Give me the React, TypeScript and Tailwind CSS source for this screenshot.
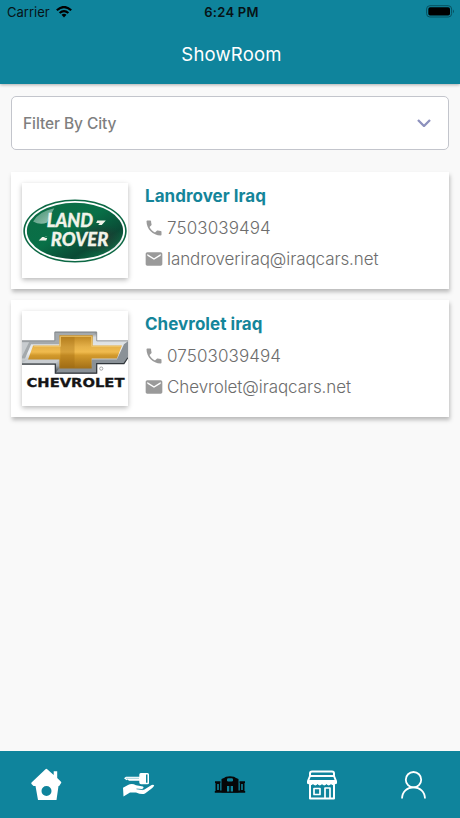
import React from 'react';

function PhoneIcon() {
  return (
    <svg viewBox="0 0 24 24" className="mb-0.5 size-5 shrink-0 fill-[#9a9a9a]">
      <path d="M6.62 10.79c1.44 2.83 3.76 5.14 6.59 6.59l2.2-2.2c.27-.27.67-.36 1.02-.24 1.12.37 2.33.57 3.57.57.55 0 1 .45 1 1V20c0 .55-.45 1-1 1-9.39 0-17-7.61-17-17 0-.55.45-1 1-1h3.500c.55 0 1 .45 1 1 0 1.250.2 2.450.57 3.570.11.35.03.74-.25 1.020z" />
    </svg>
  );
}

function MailIcon() {
  return (
    <svg viewBox="0 0 24 24" className="mb-0.5 size-5 shrink-0 fill-[#9a9a9a]">
      <path d="M20 4H4c-1.100 0-2 .9-2 2v12c0 1.100.9 2 2 2h16c1.100 0 2-.9 2-2V6c0-1.100-.9-2-2-2zm0 4-8 5-8-5V6l8 5 8-5z" />
    </svg>
  );
}

function LandRoverLogo() {
  return (
    <svg viewBox="0 0 105 94" className="h-full w-full">
      <defs>
        <linearGradient id="lrGreen" x1="0" y1="0" x2="1" y2="1">
          <stop offset="0" stopColor="#0d6b45" />
          <stop offset="0.45" stopColor="#087047" />
          <stop offset="0.72" stopColor="#0a4a35" />
          <stop offset="1" stopColor="#128a55" />
        </linearGradient>
        <radialGradient id="lrShade">
          <stop offset="0" stopColor="#253a33" stopOpacity="0.9" />
          <stop offset="1" stopColor="#253a33" stopOpacity="0" />
        </radialGradient>
        <linearGradient id="lrShine" x1="0" y1="0" x2="1" y2="1">
          <stop offset="0" stopColor="#b8d8cb" stopOpacity="0.3" />
          <stop offset="1" stopColor="#b8d8cb" stopOpacity="0.85" />
        </linearGradient>
      </defs>
      <ellipse cx="52.500" cy="47.500" rx="51.200" ry="31.300" fill="#0c6844" />
      <ellipse cx="52.500" cy="47.500" rx="49.600" ry="29.800" fill="#fff" />
      <ellipse cx="52.500" cy="47.500" rx="47.700" ry="27.900" fill="url(#lrGreen)" />
      <ellipse cx="76" cy="55" rx="24" ry="15" fill="url(#lrShade)" />
      <path d="M11 38Q17 28 32 25Q27 34 25 39Q18 42 11 38Z" fill="url(#lrShine)" />
      <g fill="#f1f3e9" stroke="#f1f3e9" strokeWidth="0.3" className="font-['Lato',sans-serif] font-black italic">
        <text x="24.500" y="43.600" fontSize="18.500" textLength="46" lengthAdjust="spacingAndGlyphs">LAND</text>
        <text x="28.500" y="62.500" fontSize="18.500" textLength="57" lengthAdjust="spacingAndGlyphs">ROVER</text>
      </g>
      <path d="M74.500 37H83L79 41.500H75.500L77 39.500H73.500Z M25.500 52.500L21.500 54.500H25L24 57H16.500L20 53.500H22.500Z" fill="#f1f3e9" />
    </svg>
  );
}

function ChevroletLogo() {
  return (
    <svg viewBox="0 0 105 94" className="h-full w-full">
      <defs>
        <linearGradient id="chSilver" x1="0" y1="0" x2="0" y2="1">
          <stop offset="0" stopColor="#777b7e" />
          <stop offset="0.13" stopColor="#d5d9dc" />
          <stop offset="0.5" stopColor="#eef0f1" />
          <stop offset="0.82" stopColor="#a2a8ad" />
          <stop offset="1" stopColor="#343a40" />
        </linearGradient>
        <linearGradient id="chGold" x1="0" y1="0" x2="0" y2="1">
          <stop offset="0" stopColor="#bc8420" />
          <stop offset="0.35" stopColor="#e6b24a" />
          <stop offset="0.5" stopColor="#f0bb4e" />
          <stop offset="0.6" stopColor="#d39a2c" />
          <stop offset="1" stopColor="#a26f17" />
        </linearGradient>
      </defs>
      <path d="M32.500 20.500H74V29.500H105V45L101 52H74V61.500H33V52.500H0V29.500H32.500Z" fill="url(#chSilver)" />
      <path d="M32.500 20.500H74L70 24H37V33H9L3 47H0V29.500H32.500Z" fill="#a4a9ac" />
      <path d="M0 31H7L0 45Z" fill="#c8cccf" />
      <path d="M33 61.500L37 56.500H69V48H94L101 33L105 30V45L101 52H74V61.500Z" fill="#8a9197" />
      <path d="M33.500 52L37 48H6L0 51.500Z" fill="#c9cdd1" />
      <path d="M0 52.500H33V61.500H74V52H101L105 46" fill="none" stroke="#30363b" strokeWidth="1.200" />
      <path d="M0 29.500H32.500V21H74V29.500H105" fill="none" stroke="#7c8185" strokeWidth="0.800" />
      <path d="M37 24H70V34H99L94 47H69V57H37V48H6L11 34H37Z" fill="url(#chGold)" />
      <path d="M38 25H52V56H38Z" fill="#99650e" opacity="0.3" />
      <path d="M12 35H38V25H69V35H98" fill="none" stroke="#efc86e" strokeWidth="0.900" />
      <circle cx="78.500" cy="57" r="1.600" fill="none" stroke="#888" strokeWidth="0.700" />
      <text x="4.500" y="75.500" fontSize="12.200" fill="#151515" stroke="#151515" strokeWidth="0.300" textLength="97" lengthAdjust="spacingAndGlyphs" className="font-['DejaVu_Sans',sans-serif] font-bold">CHEVROLET</text>
    </svg>
  );
}

type ShowroomProps = {
  name: string;
  phone: string;
  email: string;
  logo: React.ReactNode;
};

function ShowroomCard({ name, phone, email, logo }: ShowroomProps) {
  return (
    <article className="flex h-[117px] gap-[17px] bg-white pt-[11px] pl-[11px] shadow-[1px_3px_4px_rgba(0,0,0,0.25)]">
      <div className="h-[95px] w-[106px] shrink-0 bg-white shadow-[0_2px_5px_rgba(0,0,0,0.28)]">{logo}</div>
      <div className="flex flex-col pt-px">
        <h2 className="h-[29px] text-[17px] leading-[25px] font-bold tracking-[0.04px] whitespace-nowrap text-[#14859a]">{name}</h2>
        <div className="-ml-px flex h-[31px] items-center gap-[3px] text-[17px] font-light text-[#6d6d6d]">
          <PhoneIcon />
          <span className="tracking-[0.1px] whitespace-nowrap">{phone}</span>
        </div>
        <div className="-ml-px flex h-[31px] items-center gap-[3px] text-[17px] font-light text-[#6d6d6d]">
          <MailIcon />
          <span className="tracking-[-0.09px] whitespace-nowrap">{email}</span>
        </div>
      </div>
    </article>
  );
}

function HouseIcon() {
  return (
    <svg viewBox="0 0 32 32" className="mb-0.5 size-8 fill-white">
      <path fillRule="evenodd" d="M15.500 1.200Q16.300.3 17.200 1.200L23.700 7V3.300H27.200V10L31 13.700Q31.800 14.600 30.800 15.500L29.200 18H28.500L26.500 32H8L5.500 18H3.500L1.500 16Q.8 15 1.800 14.200ZM16.500 18A5 5 0 1 0 16.500 28A5 5 0 1 0 16.500 18Z" />
    </svg>
  );
}

function KeyHandIcon() {
  return (
    <svg viewBox="0 0 32 32" className="size-8 overflow-visible">
      <path fillRule="evenodd" d="M17.300 5.500Q17.300 4 18.800 4H25.500Q27 4 27 5.500V14Q27 15.300 25.500 15.300H19Q17.300 15.300 17.300 13.500V11.700H7L5.500 10.500L4.500 11.300L3 10L2 9.200L4 7.700H17.300ZM24 5.500V13.700H25.500V5.500Z" fill="#fff" />
      <path d="M4 9.300H17" stroke="#0f849c" strokeWidth="0.400" />
      <path d="M1 18.700L6 16Q10 13.800 14 16.300L21 17.500Q22.500 19.300 20 20L16 20.300L22 20.800L28 17Q31.300 14.700 32.200 16.500Q31.500 18.500 27 21.500L23 24.500Q20 26 14 23.500H8L1.500 27.500Z" fill="#fff" />
      <path d="M14.500 19.900L20.500 20.600L23 18.600" fill="none" stroke="#0f849c" strokeWidth="0.700" />
    </svg>
  );
}

function BuildingIcon() {
  return (
    <svg viewBox="0 0 32 32" className="size-8">
      <path d="M7.500 10L10.500 8.800Q11 7.200 16 7.200T21.500 8.800L24.500 10V23.500H7.500Z" fill="#060708" />
      <path d="M1 12.200H6.500V14H6.200V21.500H25.800V14H25.500V12.200H31V14H30.500V22H31.200V23.800H.8V22H1.500V14H1Z" fill="#060708" />
      <rect x="13" y="9.300" width="6" height="3.200" rx="1.200" fill="#0f849c" />
      <path d="M3.200 15H4.800V21H3.200ZM27.200 15H28.800V21H27.200ZM13 17H15.300V22.500H13ZM16.700 17H19V22.500H16.700Z" fill="#0f849c" />
    </svg>
  );
}

function StoreIcon() {
  return (
    <svg viewBox="0 0 32 32" className="size-8 fill-none stroke-white stroke-2" strokeLinejoin="round">
      <path d="M4 7V4.500Q4 2.500 6 2.500H26Q28 2.500 28 4.500V7H4L2 12V14H30V12L28 7M4 16V29.500H28V16" />
      <path d="M2 12H30M2.500 13Q4.500 17.500 7 13.300Q9.300 17.500 11.600 13.300Q13.800 17.500 16 13.300Q18.200 17.500 20.500 13.300Q22.700 17.500 25 13.300Q27.500 17.500 29.500 13" />
      <path d="M8 19.500H14V25.500H8ZM19 29V19H24V29" strokeWidth="1.700" />
    </svg>
  );
}

function PersonIcon() {
  return (
    <svg viewBox="0 0 32 32" className="size-8 fill-none stroke-white" strokeWidth="1.800">
      <circle cx="15.500" cy="10.700" r="7.700" />
      <path d="M4 29.500C4.300 22.500 9 18.400 15.500 18.400S26.700 22.500 27 29.500" />
    </svg>
  );
}

export default function App() {
  return (
    <div className="flex h-[818px] w-[460px] flex-col overflow-hidden bg-[#f9f9f9] font-['Inter',sans-serif]">
      <header className="z-10 h-[84px] shrink-0 bg-[#0f849c] shadow-[0_1px_3px_rgba(0,0,0,0.3)]">
        <div className="grid h-6 grid-cols-[1fr_auto_1fr] items-center pr-[5px] pl-[7px] text-[13px] text-[#071316]">
          <div className="flex items-center gap-[6px]">
            <span className="pt-px tracking-[0.02px]">Carrier</span>
            <svg viewBox="0 0 16 12" className="h-3 w-4 fill-none stroke-black" strokeWidth="2.200">
              <path d="M.8 4.200Q8-2.200 15.200 4.200M3.600 7Q8 3.200 12.400 7" />
              <path d="M5.500 8.700Q8 6.900 10.500 8.700L8 11.500Z" fill="#000" stroke="none" />
            </svg>
          </div>
          <span className="pt-px pl-px font-semibold tracking-[0.25px]">6:24 PM</span>
          <svg viewBox="0 0 29 13" className="mb-px h-[13px] w-[29px] justify-self-end">
            <rect x="0.600" y="0.700" width="25" height="11.300" rx="3.300" fill="none" stroke="#07505f" strokeWidth="1" />
            <rect x="2.300" y="2.300" width="21.700" height="8.200" rx="1.800" fill="#000" />
            <path d="M27 4.500Q29 6.400 27 8.300Z" fill="#07505f" />
          </svg>
        </div>
        <h1 className="pl-[3px] text-center text-[18.500px] leading-[60px] tracking-[0.2px] text-white">ShowRoom</h1>
      </header>

      <main className="flex-1 px-[11px] pt-3">
        <button className="flex h-[54px] w-full items-center justify-between rounded-[5px] border border-[#c3c5cc] bg-white pr-[17px] pl-[11px] text-[15.500px] font-medium tracking-[-0.08px] text-[#7f7f7f]">
          <span className="pt-px">Filter By City</span>
          <svg viewBox="0 0 14 8" className="h-2 w-[14px] fill-none stroke-[#8d91bd]" strokeWidth="2.300">
            <path d="M1 1L7 7L13 1" />
          </svg>
        </button>
        <div className="mt-[22px] flex flex-col gap-[11px]">
          <ShowroomCard name="Landrover Iraq" phone="7503039494" email="landroveriraq@iraqcars.net" logo={<LandRoverLogo />} />
          <ShowroomCard name="Chevrolet iraq" phone="07503039494" email="Chevrolet@iraqcars.net" logo={<ChevroletLogo />} />
        </div>
      </main>

      <nav className="grid h-[67px] shrink-0 grid-cols-5 place-items-center bg-[#0f849c]">
        <HouseIcon />
        <KeyHandIcon />
        <BuildingIcon />
        <StoreIcon />
        <PersonIcon />
      </nav>
    </div>
  );
}
